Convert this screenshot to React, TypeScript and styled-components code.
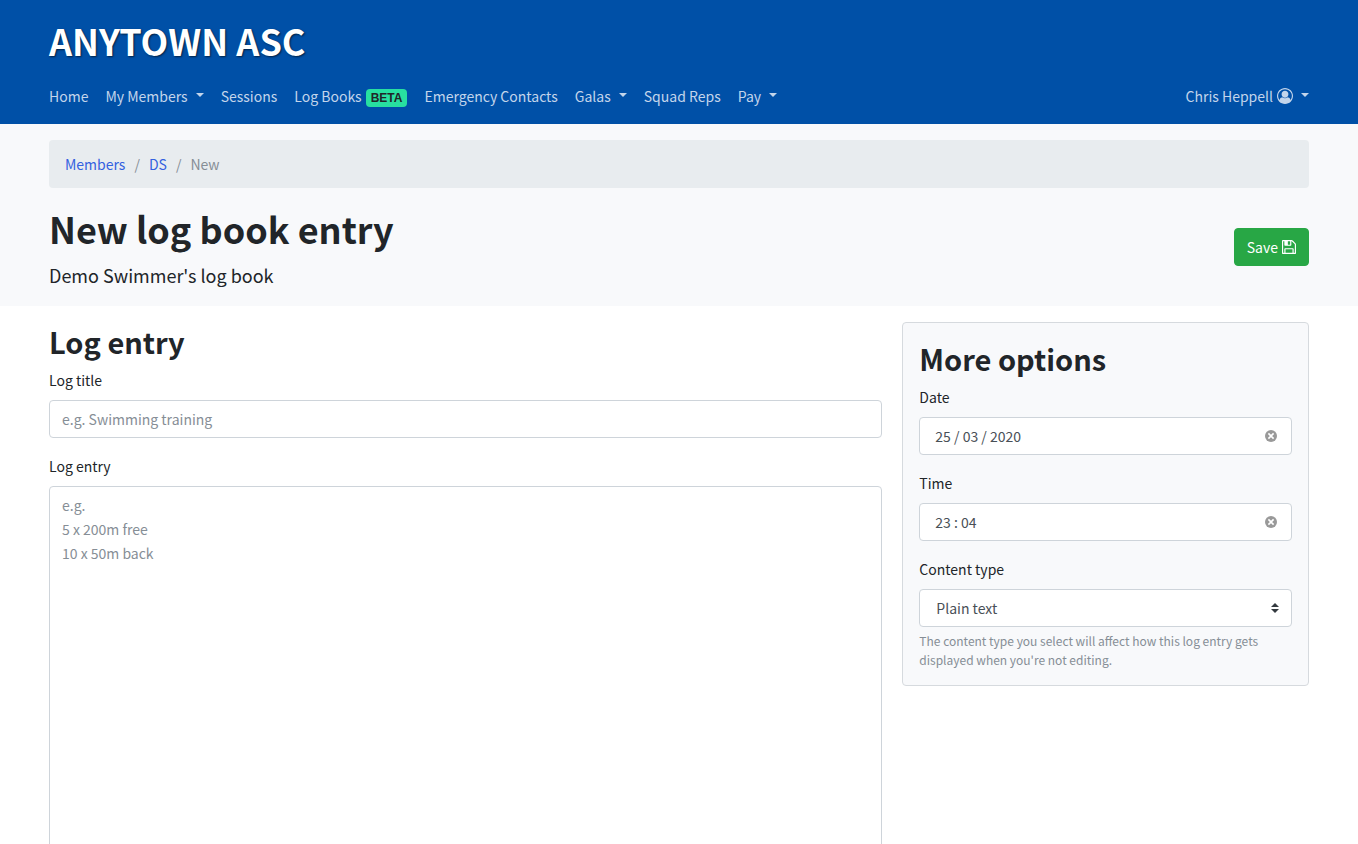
import React from "react";
import styled, { createGlobalStyle } from "styled-components";

const GlobalStyle = createGlobalStyle`
  *, *::before, *::after { box-sizing: border-box; }
  body {
    margin: 0;
    background: #fff;
    color: #212529;
    font-family: "Noto Sans CJK SC", "Noto Sans", sans-serif;
    font-size: 14px;
    line-height: 24px;
  }
`;

const Container = styled.div`
  max-width: 1292px;
  margin: 0 auto;
  padding: 0 16px;
`;

const Header = styled.header`
  background: #0050a7;
  padding: 16px 0 8px;
`;

const Brand = styled.a`
  display: block;
  width: fit-content;
  margin-bottom: 12px;
  color: #fff;
  font-size: 36px;
  font-weight: 700;
  line-height: 48px;
  text-decoration: none;
  text-shadow: 1px 1px 2px rgba(0, 0, 0, 0.6);
`;

const Nav = styled.nav`
  display: flex;
  justify-content: space-between;
`;

const NavList = styled.ul`
  display: flex;
  flex-wrap: wrap;
  gap: 0 17px;
  margin: 0;
  padding: 0;
  list-style: none;
`;

const NavLink = styled.a`
  display: flex;
  align-items: center;
  padding: 8px 0;
  color: #c3d5eb;
  text-decoration: none;
  white-space: nowrap;
`;

const Caret = styled.span`
  margin: 0 0 2px 8px;
  border: 4px solid transparent;
  border-top-color: currentColor;
  border-bottom: 0;
`;

const Badge = styled.span`
  margin: 4px 0 0 4px;
  padding: 3px 5px;
  border-radius: 4px;
  background: #28e0a0;
  color: #212529;
  font-family: "Liberation Sans", Arial, sans-serif;
  font-size: 12px;
  font-weight: 700;
  line-height: 12px;
`;

const Icon = styled.svg<{ $size: number }>`
  width: ${(p) => p.$size}px;
  height: ${(p) => p.$size}px;
  margin-left: 4px;
  fill: currentColor;
`;

const PageHead = styled.section`
  padding: 16px 0;
  background: #f8f9fb;
`;

const Breadcrumb = styled.ol`
  display: flex;
  margin: 0 0 16px;
  padding: 12px 16px;
  border-radius: 4px;
  background: #e8ecef;
  color: #868e96;
  list-style: none;
`;

const Crumb = styled.li`
  & + &::before {
    content: "/";
    padding: 0 9px;
  }
  a {
    color: #3461e0;
    text-decoration: none;
  }
`;

const TitleRow = styled.div`
  display: flex;
  align-items: center;
  justify-content: space-between;
`;

const Title = styled.h1`
  margin: 0 0 8px;
  font-size: 36px;
  font-weight: 700;
  line-height: 48px;
`;

const Lead = styled.p`
  margin: 0;
  font-size: 18px;
  line-height: 30px;
`;

const SaveButton = styled.button`
  display: flex;
  align-items: center;
  padding: 6px 12px;
  border: 1px solid #28a745;
  border-radius: 4px;
  background: #28a745;
  color: #fff;
  font: inherit;
  cursor: pointer;
`;

const Columns = styled.form`
  display: grid;
  grid-template-columns: repeat(12, 1fr);
  gap: 20px;
  align-items: start;
  padding: 16px 0;
`;

const EntryColumn = styled.div`
  grid-column: span 8;
`;

const OptionsCard = styled.aside`
  grid-column: span 4;
  padding: 16px;
  border: 1px solid #d6dade;
  border-radius: 4px;
  background: #f8f9fb;
`;

const Heading = styled.h2`
  margin: 0 0 8px;
  font-size: 29px;
  font-weight: 700;
  line-height: 38px;
`;

const Field = styled.div`
  & + & {
    margin-top: 16px;
  }
`;

const Label = styled.label`
  display: block;
  margin-bottom: 8px;
`;

const controlStyles = `
  display: block;
  width: 100%;
  border: 1px solid #ced4da;
  border-radius: 4px;
  background-color: #fff;
  color: #495057;
  font: inherit;
  &::placeholder { color: #868e96; opacity: 1; }
`;

const TextInput = styled.input`
  ${controlStyles}
  height: 38px;
  padding: 6px 12px;
`;

const TextArea = styled.textarea`
  ${controlStyles}
  padding: 6px 12px;
  resize: vertical;
`;

const PickerBox = styled.div`
  ${controlStyles}
  display: flex;
  align-items: center;
  height: 38px;
  padding: 0 14px 0 15px;
`;

const PickerInput = styled.input`
  flex: 1;
  min-width: 0;
  padding: 0;
  border: 0;
  background: transparent;
  color: inherit;
  font: inherit;
`;

const ClearButton = styled.button`
  display: flex;
  padding: 0;
  border: 0;
  background: none;
  cursor: pointer;
`;

const SelectBox = styled.div`
  display: grid;
  align-items: center;
  > * { grid-area: 1 / 1; }
`;

const Select = styled.select`
  ${controlStyles}
  height: 38px;
  padding: 6px 28px 6px 16px;
  appearance: none;
`;

const SelectArrows = styled.svg`
  justify-self: end;
  width: 8px;
  height: 10px;
  margin-right: 13px;
  fill: #343a40;
  pointer-events: none;
`;

const Help = styled.small`
  display: block;
  margin-top: 4px;
  color: #868e96;
  font-size: 12px;
  line-height: 19px;
`;

const UserIcon = () => (
  <Icon $size={16} viewBox="0 0 1792 1792" aria-hidden="true">
    <path d="M896 0q182 0 348 71t286 191 191 286 71 348q0 181-70.5 347t-190.5 286-286 191.5-349 71.5-349-71-285.5-191.5-190.5-286-71-347.5 71-348 191-286 286-191 348-71zm619 1351q149-205 149-455 0-156-61-298t-164-245-245-164-298-61-298 61-245 164-164 245-61 298q0 250 149 455 66-327 306-327 131 128 313 128t313-128q240 0 306 327zm-235-647q0-159-112.5-271.5t-271.5-112.5-271.5 112.5-112.5 271.5 112.5 271.5 271.5 112.5 271.5-112.5 112.5-271.5z" />
  </Icon>
);

const SaveIcon = () => (
  <Icon $size={14} viewBox="128 128 1536 1536" aria-hidden="true">
    <path d="M512 1536h768v-384h-768v384zm896 0h128v-896q0-14-10-38.5t-20-34.5l-281-281q-10-10-34-20t-39-10v416q0 40-28 68t-68 28h-576q-40 0-68-28t-28-68v-416h-128v1280h128v-416q0-40 28-68t68-28h832q40 0 68 28t28 68v416zm-384-928v-320q0-13-9.5-22.5t-22.5-9.5h-192q-13 0-22.5 9.5t-9.5 22.5v320q0 13 9.5 22.5t22.5 9.5h192q13 0 22.5-9.5t9.5-22.5zm640 32v928q0 40-28 68t-68 28h-1344q-40 0-68-28t-28-68v-1344q0-40 28-68t68-28h928q40 0 88 20t76 48l280 280q28 28 48 76t20 88z" />
  </Icon>
);

const ClearIcon = () => (
  <svg width="12" height="12" viewBox="0 0 12 12" aria-hidden="true">
    <circle cx="6" cy="6" r="6" fill="#999" />
    <path d="M3.4 3.4l5.2 5.2M8.6 3.4L3.4 8.6" stroke="#fff" strokeWidth="1.6" />
  </svg>
);

const navItems = [
  { text: "Home" },
  { text: "My Members", menu: true },
  { text: "Sessions" },
  { text: "Log Books", badge: "BETA" },
  { text: "Emergency Contacts" },
  { text: "Galas", menu: true },
  { text: "Squad Reps" },
  { text: "Pay", menu: true },
];

function Picker({ id, label, value }: { id: string; label: string; value: string }) {
  const [current, setCurrent] = React.useState(value);
  return (
    <Field>
      <Label htmlFor={id}>{label}</Label>
      <PickerBox>
        <PickerInput id={id} type="text" value={current} onChange={(e) => setCurrent(e.target.value)} />
        <ClearButton type="button" aria-label={`Clear ${label.toLowerCase()}`} onClick={() => setCurrent("")}>
          <ClearIcon />
        </ClearButton>
      </PickerBox>
    </Field>
  );
}

export default function App() {
  return (
    <>
      <GlobalStyle />
      <Header>
        <Container>
          <Brand href="#">ANYTOWN ASC</Brand>
          <Nav>
            <NavList>
              {navItems.map(({ text, menu, badge }) => (
                <li key={text}>
                  <NavLink href="#">
                    {text}
                    {badge && <Badge>{badge}</Badge>}
                    {menu && <Caret />}
                  </NavLink>
                </li>
              ))}
            </NavList>
            <NavLink href="#">
              Chris Heppell
              <UserIcon />
              <Caret />
            </NavLink>
          </Nav>
        </Container>
      </Header>
      <PageHead>
        <Container>
          <nav aria-label="breadcrumb">
            <Breadcrumb>
              <Crumb><a href="#">Members</a></Crumb>
              <Crumb><a href="#">DS</a></Crumb>
              <Crumb aria-current="page">New</Crumb>
            </Breadcrumb>
          </nav>
          <TitleRow>
            <div>
              <Title>New log book entry</Title>
              <Lead>Demo Swimmer's log book</Lead>
            </div>
            <SaveButton type="submit" form="log-form">
              Save
              <SaveIcon />
            </SaveButton>
          </TitleRow>
        </Container>
      </PageHead>
      <Container as="main">
        <Columns id="log-form" onSubmit={(e: React.FormEvent) => e.preventDefault()}>
          <EntryColumn>
            <Heading>Log entry</Heading>
            <Field>
              <Label htmlFor="title">Log title</Label>
              <TextInput id="title" type="text" placeholder="e.g. Swimming training" />
            </Field>
            <Field>
              <Label htmlFor="entry">Log entry</Label>
              <TextArea id="entry" rows={20} placeholder={"e.g.\n5 x 200m free\n10 x 50m back"} />
            </Field>
          </EntryColumn>
          <OptionsCard>
            <Heading>More options</Heading>
            <Picker id="date" label="Date" value="25 / 03 / 2020" />
            <Picker id="time" label="Time" value="23 : 04" />
            <Field>
              <Label htmlFor="content-type">Content type</Label>
              <SelectBox>
                <Select id="content-type" defaultValue="plain">
                  <option value="plain">Plain text</option>
                  <option value="markdown">Markdown</option>
                </Select>
                <SelectArrows viewBox="0 0 8 10" aria-hidden="true">
                  <path d="M4 0L0 4h8zM4 10L0 6h8z" />
                </SelectArrows>
              </SelectBox>
              <Help>
                The content type you select will affect how this log entry gets displayed when you're not editing.
              </Help>
            </Field>
          </OptionsCard>
        </Columns>
      </Container>
    </>
  );
}
